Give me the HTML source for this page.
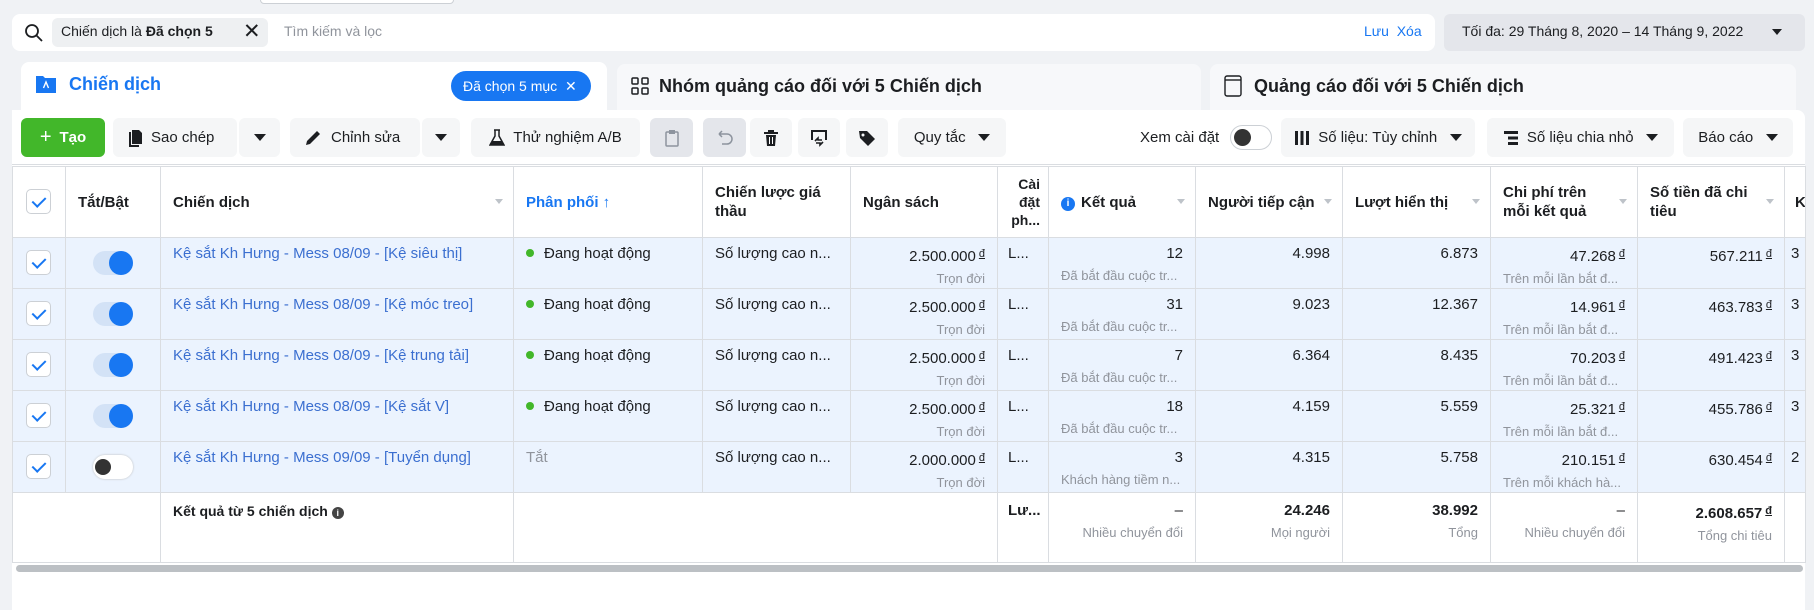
<!DOCTYPE html>
<html><head><meta charset="utf-8">
<style>
*{box-sizing:border-box;margin:0;padding:0}
body{width:1814px;height:606px;background:#f0f2f5;font-family:"Liberation Sans","Noto Sans CJK SC",sans-serif;font-size:15px;color:#1c1e21;position:relative;overflow:hidden}
.a{position:absolute}
.btn{position:absolute;top:118px;height:39px;background:#f5f6f7;border-radius:6px;display:flex;align-items:center;justify-content:center;font-size:15px;color:#1c1e21}
.tri{display:inline-block;width:0;height:0;border-left:6px solid transparent;border-right:6px solid transparent;border-top:7px solid #1c1e21}
table{position:absolute;left:12px;top:166px;border-collapse:collapse;table-layout:fixed;width:1793px}
td{border:1px solid #dadde1;border-top:none;vertical-align:top;padding:0 12px;overflow:hidden;white-space:nowrap;position:relative}
tr.h td{height:71px;vertical-align:middle;font-weight:bold;font-size:15px;white-space:normal;line-height:19px;border-top:1px solid #dadde1;background:#fff;padding-right:22px}
tr.r td{height:51px;background:#ebf3fe;padding-top:6px;line-height:20px}
tr.f td{height:70px;background:#fff;padding-top:8px;line-height:20px}
.r .num,.f .num{text-align:right}
.sub{font-size:13px;color:#90949c;line-height:18px;margin-top:3px}
.lk{color:#3b6fd0}
.cb{position:absolute;left:13px;width:25px;height:25px;border:1px solid #ccd0d5;border-radius:5px;background:#fff}
.cb:after{content:"";position:absolute;left:8px;top:4px;width:6px;height:11px;border:solid #1877f2;border-width:0 2px 2px 0;transform:rotate(45deg)}
.tg{position:absolute;left:27px;top:13px;width:40px;height:24px;border-radius:12px;background:#d3e2f6}
.tg:after{content:"";position:absolute;right:0;top:0;width:24px;height:24px;border-radius:50%;background:#1877f2}
.tg.off{background:#fff;box-shadow:0 0 2px #bbb}
.tg.off:after{left:2px;right:auto;top:4px;width:16px;height:16px;background:#333}
.dot{display:inline-block;width:8px;height:8px;border-radius:50%;background:#42b72a;margin-right:10px;vertical-align:1px}
.sort{position:absolute;right:10px;top:32px;width:0;height:0;border-left:4px solid transparent;border-right:4px solid transparent;border-top:5px solid #bec3c9}
.d{font-size:11px;text-decoration:underline;vertical-align:4px;margin-left:3px}
</style></head><body>

<div class="a" style="left:260px;top:-4px;width:194px;height:8px;border:1px solid #ccd0d5;border-radius:6px;background:#fff"></div>

<div class="a" style="left:12px;top:14px;width:1423px;height:37px;background:#fff;border-radius:8px"></div>
<svg class="a" style="left:24px;top:23px" width="20" height="20" viewBox="0 0 20 20"><circle cx="8" cy="8" r="6" fill="none" stroke="#1c1e21" stroke-width="1.8"/><line x1="12.5" y1="12.5" x2="18" y2="18" stroke="#1c1e21" stroke-width="1.8"/></svg>
<div class="a" style="left:52px;top:18px;width:216px;height:29px;background:#eef0f2;border-radius:6px"></div>
<div class="a" style="left:61px;top:23px;font-size:14px">Chiến dịch là <b>Đã chọn 5</b></div>
<div class="a" style="left:243px;top:19px;font-size:21px;font-weight:300">✕</div>
<div class="a" style="left:284px;top:23px;font-size:14px;color:#90949c">Tìm kiếm và lọc</div>
<div class="a" style="left:1364px;top:23px;font-size:14px;color:#1877f2">Lưu&nbsp;&nbsp;Xóa</div>
<div class="a" style="left:1444px;top:14px;width:361px;height:37px;background:#e4e6eb;border-radius:6px"></div>
<div class="a" style="left:1462px;top:23px;font-size:14px">Tối đa: 29 Tháng 8, 2020 – 14 Tháng 9, 2022</div>
<div class="a" style="left:1772px;top:29px;width:10px;height:6px;border-left:5px solid transparent;border-right:5px solid transparent;border-top:6px solid #1c1e21;box-sizing:border-box"></div>

<div class="a" style="left:21px;top:62px;width:586px;height:56px;background:#fff;border-radius:8px 8px 0 0"></div>
<div class="a" style="left:617px;top:64px;width:584px;height:46px;background:#f7f8fa;border-radius:8px 8px 0 0"></div>
<div class="a" style="left:1210px;top:64px;width:586px;height:46px;background:#f7f8fa;border-radius:8px 8px 0 0"></div>
<svg class="a" style="left:35px;top:74px" width="22" height="20" viewBox="0 0 22 20"><path d="M1 2h7l2 2h11v15H1z" fill="#1877f2"/><path d="M8.5 14l2.5-6 2.5 6" stroke="#fff" stroke-width="1.4" fill="none"/></svg>
<div class="a" style="left:69px;top:74px;font-size:18px;font-weight:bold;color:#1877f2">Chiến dịch</div>
<div class="a" style="left:451px;top:71px;width:140px;height:30px;background:#1877f2;border-radius:15px;color:#fff;font-size:14px;line-height:30px;padding-left:12px">Đã chọn 5 mục&nbsp;&nbsp;✕</div>
<svg class="a" style="left:631px;top:77px" width="18" height="18" viewBox="0 0 18 18" fill="none" stroke="#1c1e21" stroke-width="1.5"><rect x="1" y="1" width="6" height="6" rx="1"/><rect x="11" y="1" width="6" height="6" rx="1"/><rect x="1" y="11" width="6" height="6" rx="1"/><rect x="11" y="11" width="6" height="6" rx="1"/></svg>
<div class="a" style="left:659px;top:76px;font-size:18px;font-weight:bold">Nhóm quảng cáo đối với 5 Chiến dịch</div>
<svg class="a" style="left:1224px;top:75px" width="18" height="22" viewBox="0 0 18 22" fill="none" stroke="#1c1e21" stroke-width="1.4"><rect x="1" y="1" width="16" height="20" rx="2"/><line x1="1" y1="5" x2="17" y2="5"/></svg>
<div class="a" style="left:1254px;top:76px;font-size:18px;font-weight:bold">Quảng cáo đối với 5 Chiến dịch</div>

<div class="a" style="left:12px;top:110px;width:1793px;height:500px;background:#fff;border-radius:0 8px 0 0"></div>
<div class="a" style="left:21px;top:108px;width:586px;height:6px;background:#fff"></div>

<div class="btn" style="left:21px;width:84px;background:#42b72a;color:#fff;font-weight:bold"><span style="font-size:20px;font-weight:normal;margin-right:8px">+</span>Tạo</div>
<div class="btn" style="left:113px;width:124px;justify-content:flex-start;padding-left:14px"><svg width="16" height="18" viewBox="0 0 16 18" style="margin-right:8px"><path d="M3 3v14h9" stroke="#1c1e21" stroke-width="2" fill="none"/><path d="M5 1h7l3 3v11H5z" fill="#1c1e21"/></svg>Sao chép</div>
<div class="btn" style="left:239px;width:41px"><span class="tri"></span></div>
<div class="btn" style="left:290px;width:130px;justify-content:flex-start;padding-left:14px"><svg width="18" height="18" viewBox="0 0 18 18" style="margin-right:9px"><path d="M2 16l1-4L13 2l3 3L6 15z" fill="#1c1e21"/></svg>Chỉnh sửa</div>
<div class="btn" style="left:422px;width:38px"><span class="tri"></span></div>
<div class="btn" style="left:471px;width:169px"><svg width="16" height="18" viewBox="0 0 16 18" style="margin-right:8px"><path d="M5 1h6M6 1v6L1 16h14L10 7V1" stroke="#1c1e21" stroke-width="1.5" fill="none"/><path d="M3 12h10l2 4H1z" fill="#1c1e21"/></svg>Thử nghiệm A/B</div>
<div class="btn" style="left:650px;width:43px;background:#e4e6eb"><svg width="14" height="18" viewBox="0 0 14 18"><rect x="1" y="3" width="12" height="14" rx="1" fill="none" stroke="#8d949e" stroke-width="1.5"/><rect x="4" y="1" width="6" height="4" fill="#8d949e"/></svg></div>
<div class="btn" style="left:703px;width:43px;background:#e4e6eb"><svg width="18" height="16" viewBox="0 0 18 16"><path d="M3 4h8a5 5 0 010 10H6M3 4l3-3M3 4l3 3" stroke="#8d949e" stroke-width="1.5" fill="none"/></svg></div>
<div class="btn" style="left:750px;width:42px"><svg width="16" height="18" viewBox="0 0 16 18"><path d="M1 4h14M6 4V2h4v2" stroke="#1c1e21" stroke-width="2" fill="none"/><path d="M3 6h10l-1 11H4z" fill="#1c1e21"/><path d="M6.5 8v7M9.5 8v7" stroke="#fff" stroke-width="1"/></svg></div>
<div class="btn" style="left:798px;width:42px"><svg width="18" height="18" viewBox="0 0 18 18"><path d="M2 11V2h14v9" stroke="#1c1e21" stroke-width="2" fill="none"/><path d="M5 12l3-3v2h4M13 13l-3 3v-2H6" stroke="#1c1e21" stroke-width="1.6" fill="none"/></svg></div>
<div class="btn" style="left:846px;width:42px"><svg width="18" height="18" viewBox="0 0 18 18"><path d="M1 2h8l8 8-7 7-8-8z" fill="#1c1e21"/><circle cx="5" cy="6" r="1.5" fill="#f5f6f7"/></svg></div>
<div class="btn" style="left:898px;width:108px">Quy tắc&nbsp;&nbsp;&nbsp;<span class="tri"></span></div>
<div class="a" style="left:1140px;top:129px;font-size:15px">Xem cài đặt</div>
<div class="a" style="left:1230px;top:125px;width:42px;height:25px;border-radius:13px;background:#fff;border:1px solid #ccd0d5"><div style="position:absolute;left:3px;top:3px;width:17px;height:17px;border-radius:50%;background:#333"></div></div>
<div class="btn" style="left:1281px;width:194px"><svg width="16" height="16" viewBox="0 0 16 16" style="margin-right:8px"><rect x="1" y="1" width="3" height="14" fill="#1c1e21"/><rect x="6.5" y="1" width="3" height="14" fill="#1c1e21"/><rect x="12" y="1" width="3" height="14" fill="#1c1e21"/></svg>Số liệu: Tùy chỉnh&nbsp;&nbsp;&nbsp;<span class="tri"></span></div>
<div class="btn" style="left:1487px;width:187px"><svg width="16" height="16" viewBox="0 0 16 16" style="margin-right:8px"><rect x="1" y="1" width="14" height="3" fill="#1c1e21"/><rect x="5" y="6.5" width="10" height="3" fill="#1c1e21"/><rect x="5" y="12" width="10" height="3" fill="#1c1e21"/></svg>Số liệu chia nhỏ&nbsp;&nbsp;&nbsp;<span class="tri"></span></div>
<div class="btn" style="left:1683px;width:110px">Báo cáo&nbsp;&nbsp;&nbsp;<span class="tri"></span></div>
<div class="a" style="left:12px;top:164px;width:1793px;height:1px;background:#dadde1"></div>

<table>
<colgroup><col style="width:53px"><col style="width:95px"><col style="width:353px"><col style="width:189px"><col style="width:148px"><col style="width:147px"><col style="width:51px"><col style="width:147px"><col style="width:147px"><col style="width:148px"><col style="width:147px"><col style="width:147px"><col style="width:21px"></colgroup>
<tr class="h">
<td style="padding:0"><div class="cb" style="top:22px"></div></td>
<td style="padding-left:12px;padding-right:4px">Tắt/Bật</td>
<td>Chiến dịch<span class="sort"></span></td>
<td style="color:#1877f2">Phân phối ↑</td>
<td>Chiến lược giá thầu</td>
<td>Ngân sách</td>
<td style="text-align:right;padding:0 8px 0 4px;font-size:14px;line-height:18px">Cài đặt ph...</td>
<td><span style="display:inline-block;width:14px;height:14px;border-radius:50%;background:#1877f2;color:#fff;font-size:10px;text-align:center;line-height:14px;margin-right:6px;vertical-align:1px">i</span>Kết quả<span class="sort"></span></td>
<td style="padding-right:10px">Người tiếp cận<span class="sort"></span></td>
<td>Lượt hiển thị<span class="sort"></span></td>
<td style="padding-right:40px">Chi phí trên mỗi kết quả<span class="sort"></span></td>
<td style="padding-right:26px">Số tiền đã chi tiêu<span class="sort"></span></td>
<td style="padding:0 0 0 10px">K</td>
</tr>
<tr class="r"><td><div class="cb" style="top:12px"></div></td><td><div class="tg"></div></td><td class="lk">Kệ sắt Kh Hưng - Mess 08/09 - [Kệ siêu thị]</td><td><span class="dot"></span>Đang hoạt động</td><td>Số lượng cao n...</td><td class="num">2.500.000<span class="d">đ</span><div class="sub">Trọn đời</div></td><td style="padding-left:10px">L...</td><td class="num">12<div class="sub" style="text-align:left">Đã bắt đầu cuộc tr...</div></td><td class="num">4.998</td><td class="num">6.873</td><td class="num">47.268<span class="d">đ</span><div class="sub" style="text-align:left">Trên mỗi lần bắt đ...</div></td><td class="num">567.211<span class="d">đ</span></td><td style="padding-left:6px">3</td></tr>
<tr class="r"><td><div class="cb" style="top:12px"></div></td><td><div class="tg"></div></td><td class="lk">Kệ sắt Kh Hưng - Mess 08/09 - [Kệ móc treo]</td><td><span class="dot"></span>Đang hoạt động</td><td>Số lượng cao n...</td><td class="num">2.500.000<span class="d">đ</span><div class="sub">Trọn đời</div></td><td style="padding-left:10px">L...</td><td class="num">31<div class="sub" style="text-align:left">Đã bắt đầu cuộc tr...</div></td><td class="num">9.023</td><td class="num">12.367</td><td class="num">14.961<span class="d">đ</span><div class="sub" style="text-align:left">Trên mỗi lần bắt đ...</div></td><td class="num">463.783<span class="d">đ</span></td><td style="padding-left:6px">3</td></tr>
<tr class="r"><td><div class="cb" style="top:12px"></div></td><td><div class="tg"></div></td><td class="lk">Kệ sắt Kh Hưng - Mess 08/09 - [Kệ trung tải]</td><td><span class="dot"></span>Đang hoạt động</td><td>Số lượng cao n...</td><td class="num">2.500.000<span class="d">đ</span><div class="sub">Trọn đời</div></td><td style="padding-left:10px">L...</td><td class="num">7<div class="sub" style="text-align:left">Đã bắt đầu cuộc tr...</div></td><td class="num">6.364</td><td class="num">8.435</td><td class="num">70.203<span class="d">đ</span><div class="sub" style="text-align:left">Trên mỗi lần bắt đ...</div></td><td class="num">491.423<span class="d">đ</span></td><td style="padding-left:6px">3</td></tr>
<tr class="r"><td><div class="cb" style="top:12px"></div></td><td><div class="tg"></div></td><td class="lk">Kệ sắt Kh Hưng - Mess 08/09 - [Kệ sắt V]</td><td><span class="dot"></span>Đang hoạt động</td><td>Số lượng cao n...</td><td class="num">2.500.000<span class="d">đ</span><div class="sub">Trọn đời</div></td><td style="padding-left:10px">L...</td><td class="num">18<div class="sub" style="text-align:left">Đã bắt đầu cuộc tr...</div></td><td class="num">4.159</td><td class="num">5.559</td><td class="num">25.321<span class="d">đ</span><div class="sub" style="text-align:left">Trên mỗi lần bắt đ...</div></td><td class="num">455.786<span class="d">đ</span></td><td style="padding-left:6px">3</td></tr>
<tr class="r"><td><div class="cb" style="top:12px"></div></td><td><div class="tg off"></div></td><td class="lk">Kệ sắt Kh Hưng - Mess 09/09 - [Tuyển dụng]</td><td style="color:#90949c">Tắt</td><td>Số lượng cao n...</td><td class="num">2.000.000<span class="d">đ</span><div class="sub">Trọn đời</div></td><td style="padding-left:10px">L...</td><td class="num">3<div class="sub" style="text-align:left">Khách hàng tiềm n...</div></td><td class="num">4.315</td><td class="num">5.758</td><td class="num">210.151<span class="d">đ</span><div class="sub" style="text-align:left">Trên mỗi khách hà...</div></td><td class="num">630.454<span class="d">đ</span></td><td style="padding-left:6px">2</td></tr>
<tr class="f"><td style="border-right:none"></td><td style="border-left:none"></td><td style="font-weight:bold;font-size:14px">Kết quả từ 5 chiến dịch <span style="display:inline-block;width:12px;height:12px;border-radius:50%;background:#444;color:#fff;font-size:9px;text-align:center;line-height:12px;vertical-align:0">i</span></td><td style="border-right:none"></td><td style="border-left:none;border-right:none"></td><td style="border-left:none"></td><td style="font-weight:bold;padding-left:10px">Lư...</td><td class="num">–<div class="sub">Nhiều chuyển đổi</div></td><td class="num" style="font-weight:bold">24.246<div class="sub" style="font-weight:normal">Mọi người</div></td><td class="num" style="font-weight:bold">38.992<div class="sub" style="font-weight:normal">Tổng</div></td><td class="num">–<div class="sub">Nhiều chuyển đổi</div></td><td class="num" style="font-weight:bold">2.608.657<span class="d">đ</span><div class="sub" style="font-weight:normal">Tổng chi tiêu</div></td><td></td></tr>
</table>

<div class="a" style="left:16px;top:565px;width:1787px;height:7px;background:#bcc0c4;border-radius:4px"></div>
</body></html>
